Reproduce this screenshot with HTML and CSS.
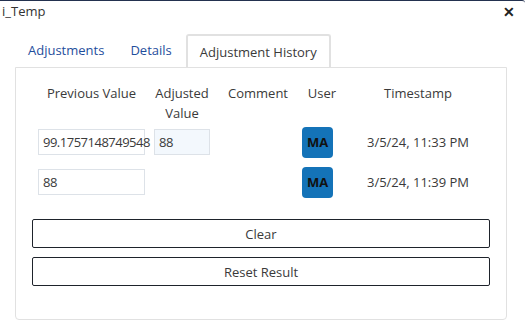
FILE: index.html
```html
<!DOCTYPE html>
<html lang="en">
<head>
    <meta charset="UTF-8">
    <title>i_Temp</title>
    <link rel="stylesheet" href="styles.css">
</head>
<body>
<div class="dialog">
    <div class="titlebar">
        <span class="title">i_Temp</span>
        <span class="close">&#x2715;</span>
    </div>

    <div class="tabs">
        <span class="tab">Adjustments</span>
        <span class="tab">Details</span>
        <span class="tab active">Adjustment History</span>
    </div>

    <div class="panel">
        <div class="history">
            <div class="head">Previous Value</div>
            <div class="head">Adjusted<br>Value</div>
            <div class="head">Comment</div>
            <div class="head">User</div>
            <div class="head">Timestamp</div>

            <div class="cell"><div class="field">99.1757148749548</div></div>
            <div class="cell"><div class="field short adjusted">88</div></div>
            <div class="cell"></div>
            <div class="cell user"><span class="avatar">MA</span></div>
            <div class="cell stamp">3/5/24, 11:33 PM</div>

            <div class="cell"><div class="field">88</div></div>
            <div class="cell"></div>
            <div class="cell"></div>
            <div class="cell user"><span class="avatar">MA</span></div>
            <div class="cell stamp">3/5/24, 11:39 PM</div>
        </div>

        <div class="actions">
            <button class="btn">Clear</button>
            <button class="btn">Reset Result</button>
        </div>
    </div>
</div>
</body>
</html>
```

FILE: styles.css
```css
:root {
    --text-color: #3a3a3a;
    --link-color: #1f4e9c;
    --line-color: #e1e1e1;
    --avatar-color: #1473b8;
}

* {
    margin: 0;
    padding: 0;
    box-sizing: border-box;
}

body {
    font-family: "Open Sans", "Noto Sans", sans-serif;
    font-size: 13px;
    color: var(--text-color);
    background: #fff;
}

.dialog {
    width: 525px;
    height: 326px;
    border-top: 1px solid #23314f;
    border-top-right-radius: 3px;
}

.titlebar {
    display: flex;
    justify-content: space-between;
    align-items: center;
    height: 20px;
    padding: 0 10px 0 2px;
}

.title {
    font-size: 13px;
    color: #333;
}

.close {
    font-size: 14px;
    font-weight: bold;
    color: #222;
}

.tabs {
    display: flex;
    align-items: flex-end;
    margin-top: 14px;
    padding-left: 15px;
    height: 32px;
}

.tab {
    color: var(--link-color);
    padding: 0 13px 8px;
}

.tab.active {
    color: var(--text-color);
    border: 2px solid var(--line-color);
    border-bottom: none;
    border-radius: 3px 3px 0 0;
    padding: 7px 12px 6px;
    margin-left: 1px;
}

.panel {
    margin-left: 15px;
    width: 492px;
    height: 253px;
    border: 1px solid var(--line-color);
    border-radius: 0 0 4px 4px;
    padding: 12px 15px 0 16px;
}

.history {
    display: grid;
    grid-template-columns: 115px 66px 86px 42px 150px;
    grid-template-rows: 42px 40px 40px;
    margin-left: 2px;
}

.head {
    text-align: center;
    line-height: 20px;
    padding-top: 3px;
}

.cell {
    display: flex;
    align-items: center;
    justify-content: center;
}

.field {
    display: flex;
    align-items: center;
    width: 107px;
    height: 26px;
    border: 1px solid #dde2e8;
    padding: 0 4px;
    white-space: nowrap;
    letter-spacing: -0.5px;
    background: #fff;
}

.field.short {
    width: 56px;
}

.field.adjusted {
    background: #f3f8fd;
}

.cell.user {
    justify-content: flex-start;
}

.avatar {
    display: flex;
    align-items: center;
    justify-content: center;
    width: 31px;
    height: 31px;
    margin-left: 1px;
    border-radius: 4px;
    background: var(--avatar-color);
    color: #111;
    font-weight: bold;
    font-size: 13px;
}

.actions {
    display: flex;
    flex-direction: column;
    gap: 9px;
    margin-top: 17px;
}

.btn {
    font-family: inherit;
    font-size: 13px;
    color: var(--text-color);
    background: #fff;
    height: 29px;
    width: 458px;
    border: 1px solid #1e232b;
    border-radius: 2px;
}
```
